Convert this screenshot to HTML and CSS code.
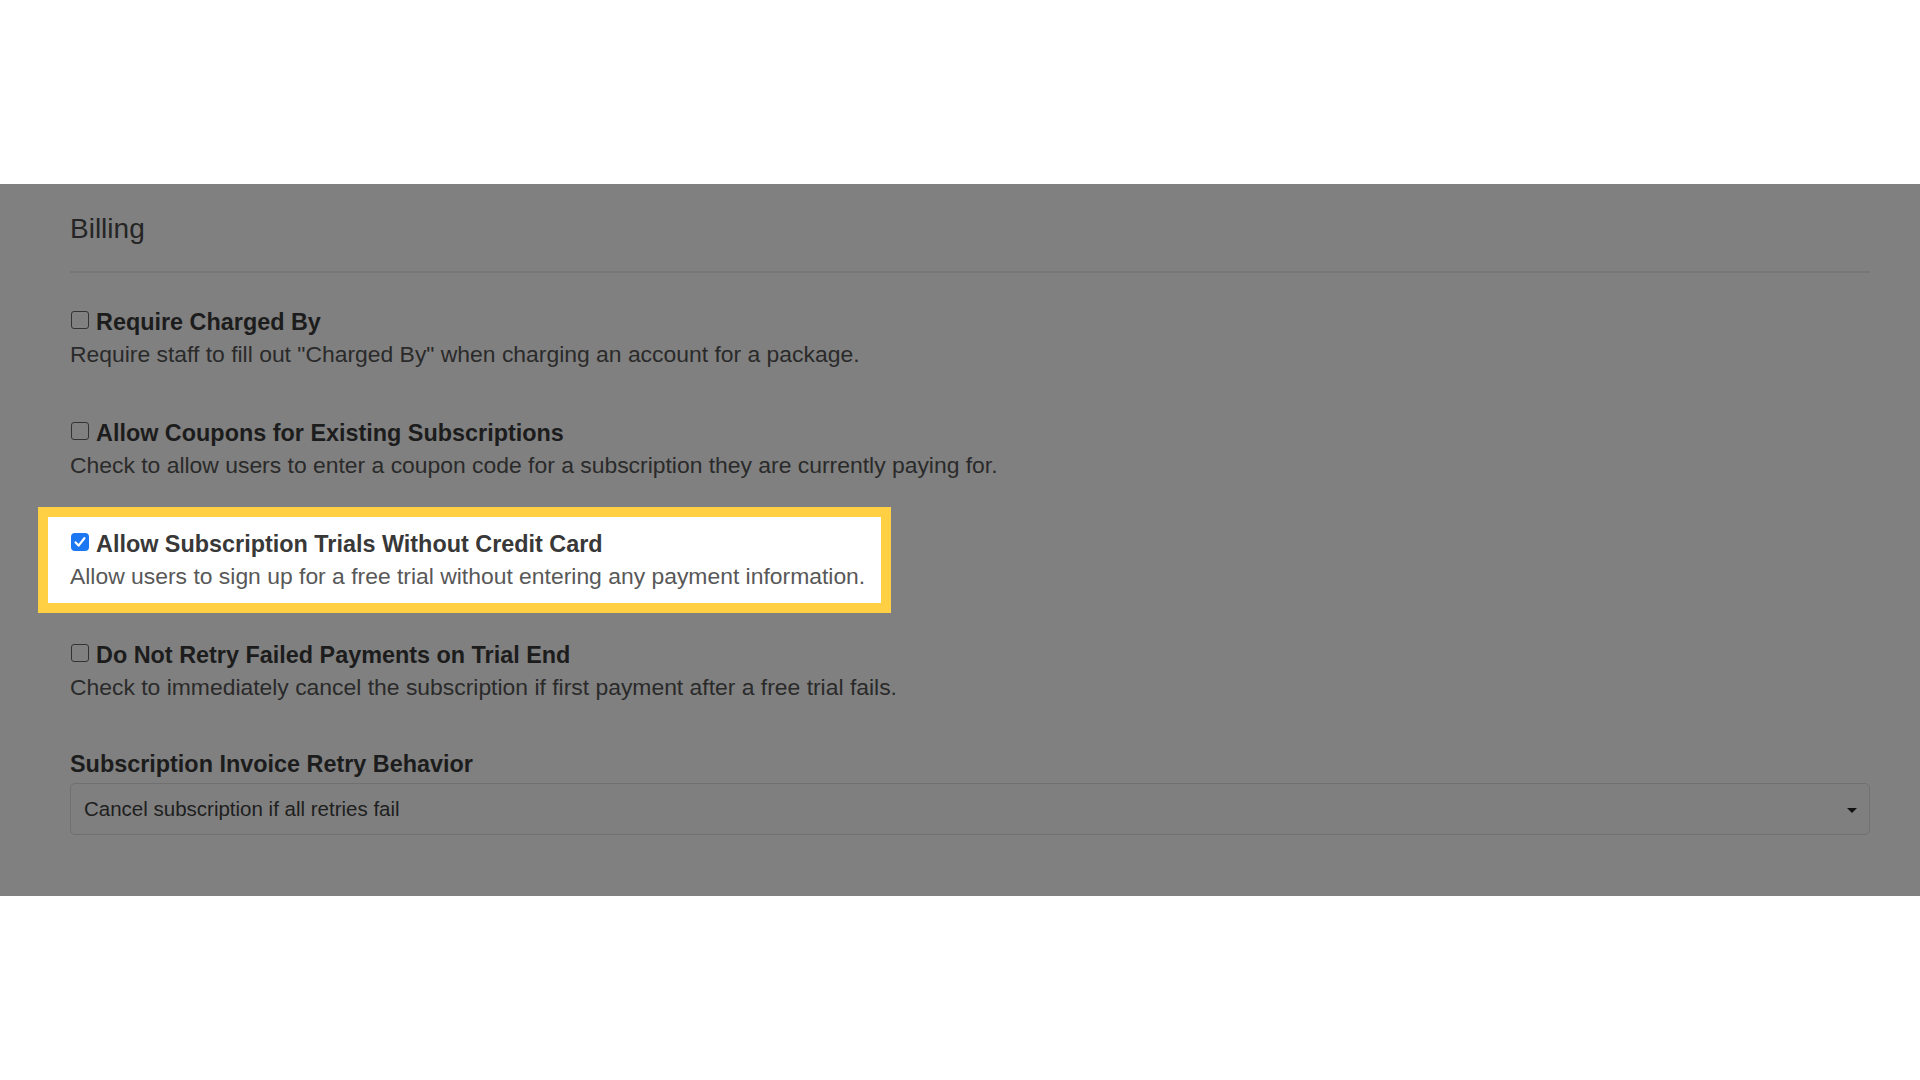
FILE: index.html
```html
<!DOCTYPE html>
<html lang="en">
<head>
<meta charset="utf-8">
<title>Billing</title>
<link rel="stylesheet" href="styles.css">
</head>
<body>
<div class="top-space"></div>
<section class="panel">
  <h2 class="panel-title">Billing</h2>
  <hr class="divider">
  <div class="setting">
    <label class="setting-label"><span class="box"></span>Require Charged By</label>
    <p class="setting-desc">Require staff to fill out "Charged By" when charging an account for a package.</p>
  </div>
  <div class="setting">
    <label class="setting-label"><span class="box"></span>Allow Coupons for Existing Subscriptions</label>
    <p class="setting-desc">Check to allow users to enter a coupon code for a subscription they are currently paying for.</p>
  </div>
  <div class="setting highlight">
    <label class="setting-label"><span class="box checked"><svg viewBox="0 0 18 18" width="18" height="18"><path d="M4.6 9.4 L7.6 12.6 L13.4 5.2" fill="none" stroke="#fff" stroke-width="2.2" stroke-linecap="round" stroke-linejoin="round"/></svg></span>Allow Subscription Trials Without Credit Card</label>
    <p class="setting-desc">Allow users to sign up for a free trial without entering any payment information.</p>
  </div>
  <div class="setting">
    <label class="setting-label"><span class="box"></span>Do Not Retry Failed Payments on Trial End</label>
    <p class="setting-desc">Check to immediately cancel the subscription if first payment after a free trial fails.</p>
  </div>
  <div class="field">
    <div class="field-label">Subscription Invoice Retry Behavior</div>
    <div class="select">
      <span class="select-text">Cancel subscription if all retries fail</span>
      <span class="caret"></span>
    </div>
  </div>
</section>
</body>
</html>
```
FILE: styles.css
```css
html, body {
  margin: 0;
  padding: 0;
  background: #ffffff;
  font-family: "Liberation Sans", Arial, Helvetica, sans-serif;
}

.top-space {
  height: 184px;
}

.panel {
  background: #808080;
  height: 712px;
  box-sizing: border-box;
  padding: 25px 50px 0 70px;
}

.panel-title {
  margin: 0;
  font-size: 28px;
  line-height: 40px;
  font-weight: normal;
  color: #252525;
}

.divider {
  margin: 22px 0 0 0;
  border: 0;
  border-top: 2px solid #777777;
  height: 0;
}

.setting {
  margin-top: 33px;
}

.setting + .setting {
  margin-top: 46px;
}

.setting-label {
  display: flex;
  align-items: flex-start;
  gap: 7px;
  font-size: 23.4px;
  line-height: 33px;
  font-weight: bold;
  color: #1c1c1c;
}

.box {
  flex: none;
  box-sizing: border-box;
  width: 18px;
  height: 18px;
  margin: 5px 0 0 1px;
  border: 1.5px solid #333333;
  border-radius: 3px;
  display: flex;
  align-items: center;
  justify-content: center;
}

.box.checked {
  border: 0;
  background: #1b78f2;
  border-radius: 4px;
}

.setting-desc {
  margin: -1px 0 0 0;
  font-size: 22.9px;
  line-height: 33px;
  color: #2a2a2a;
}

.highlight {
  position: relative;
  isolation: isolate;
  width: fit-content;
}

.highlight::before {
  content: "";
  position: absolute;
  top: -21px;
  bottom: -20px;
  left: -32px;
  right: -26px;
  background: #ffffff;
  border: 10px solid #ffd043;
  z-index: -1;
}

.highlight .setting-label {
  color: #383838;
}

.highlight .setting-desc {
  color: #585858;
}

.field {
  margin-top: 44px;
}

.field-label {
  font-size: 23.4px;
  line-height: 33px;
  font-weight: bold;
  color: #1c1c1c;
}

.select {
  margin-top: 2px;
  height: 52px;
  box-sizing: border-box;
  border: 1px solid #707070;
  border-radius: 5px;
  background: #7f7f7f;
  display: flex;
  align-items: center;
  justify-content: space-between;
  padding: 0 12px 0 13px;
}

.select-text {
  font-size: 20.5px;
  color: #1e1e1e;
}

.caret {
  width: 0;
  height: 0;
  border-left: 5px solid transparent;
  border-right: 5px solid transparent;
  border-top: 5px solid #111111;
  margin-top: 2px;
}
```
